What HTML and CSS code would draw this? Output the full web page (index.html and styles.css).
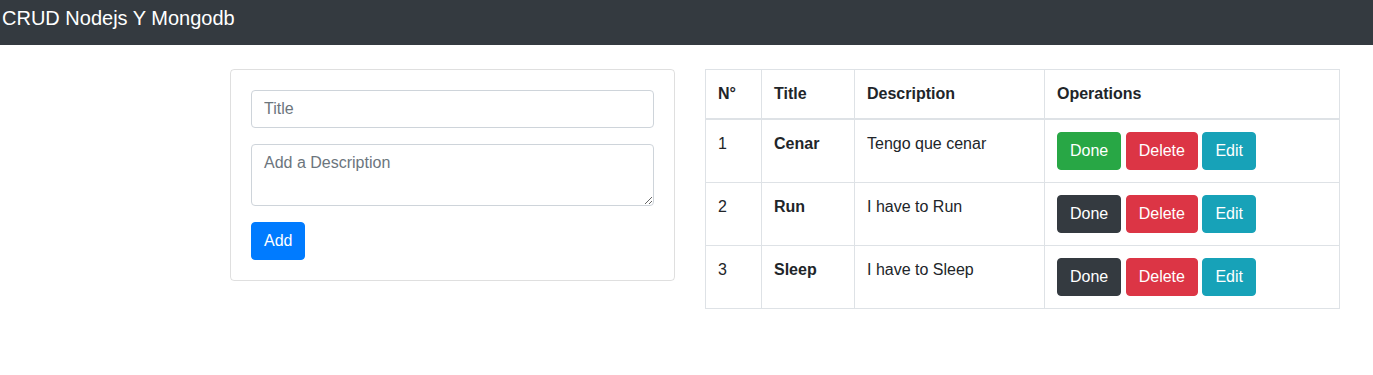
FILE: index.html
```html
<!DOCTYPE html>
<html>
<head>
	<meta charset="utf-8">
	<title>CRUD Nodejs Y Mongodb</title>
	<link rel="stylesheet" href="styles.css">
</head>
<body>
	<nav class="navbar">
		<a class="navbar__brand" href="/">CRUD Nodejs Y Mongodb</a>
	</nav>

	<div class="page">
		<div class="card">
			<form class="card__body" action="/add" method="post">
				<div class="form-group">
					<input class="form-control" type="text" name="title" placeholder="Title">
				</div>
				<div class="form-group">
					<textarea class="form-control" name="description" rows="2" placeholder="Add a Description"></textarea>
				</div>
				<button class="btn btn_primary" type="submit">Add</button>
			</form>
		</div>

		<table class="table">
			<colgroup>
				<col class="table__col-num">
				<col class="table__col-title">
				<col class="table__col-desc">
				<col>
			</colgroup>
			<thead>
				<tr>
					<th>N°</th>
					<th>Title</th>
					<th>Description</th>
					<th>Operations</th>
				</tr>
			</thead>
			<tbody>
				<tr>
					<td>1</td>
					<td><strong>Cenar</strong></td>
					<td>Tengo que cenar</td>
					<td>
						<a class="btn btn_success" href="#">Done</a>
						<a class="btn btn_danger" href="#">Delete</a>
						<a class="btn btn_info" href="#">Edit</a>
					</td>
				</tr>
				<tr>
					<td>2</td>
					<td><strong>Run</strong></td>
					<td>I have to Run</td>
					<td>
						<a class="btn btn_dark" href="#">Done</a>
						<a class="btn btn_danger" href="#">Delete</a>
						<a class="btn btn_info" href="#">Edit</a>
					</td>
				</tr>
				<tr>
					<td>3</td>
					<td><strong>Sleep</strong></td>
					<td>I have to Sleep</td>
					<td>
						<a class="btn btn_dark" href="#">Done</a>
						<a class="btn btn_danger" href="#">Delete</a>
						<a class="btn btn_info" href="#">Edit</a>
					</td>
				</tr>
			</tbody>
		</table>
	</div>
</body>
</html>
```

FILE: styles.css
```css
body {
	margin: 0;
	color: #212529;
	font-size: 16px;
	line-height: 1.5;
	font-family: "Liberation Sans", Arial, sans-serif;
	background-color: #fff;
}


.navbar {
	height: 45px;
	box-sizing: border-box;
	padding: 3px 2px 0;
	background-color: #343a40;
}
	.navbar__brand {
		color: #fff;
		font-size: 20px;
		line-height: 30px;
		text-decoration: none;
	}


.page {
	display: flex;
	align-items: flex-start;
	gap: 30px;
	padding: 24px 0 0 230px;
}


.card {
	width: 445px;
	box-sizing: border-box;
	border: 1px solid rgba(0,0,0,.125);
	border-radius: 4px;
}
	.card__body {
		padding: 20px;
	}

.form-group {
	margin-bottom: 16px;
}

.form-control {
	display: block;
	width: 100%;
	box-sizing: border-box;
	height: 38px;
	margin: 0;
	padding: 6px 12px;
	color: #495057;
	font: inherit;
	border: 1px solid #ced4da;
	border-radius: 4px;
	background-color: #fff;
}
	textarea.form-control {
		height: 62px;
		resize: vertical;
	}
	.form-control::placeholder {
		color: #6c757d;
		opacity: 1;
	}


.btn {
	display: inline-block;
	padding: 6px 12px;
	color: #fff;
	font: inherit;
	line-height: 24px;
	text-decoration: none;
	border: 1px solid transparent;
	border-radius: 4px;
	cursor: pointer;
}
	.btn_primary { background-color: #007bff; border-color: #007bff; }
	.btn_success { background-color: #28a745; border-color: #28a745; }
	.btn_danger  { background-color: #dc3545; border-color: #dc3545; }
	.btn_info    { background-color: #17a2b8; border-color: #17a2b8; }
	.btn_dark    { background-color: #343a40; border-color: #343a40; }


.table {
	width: 635px;
	table-layout: fixed;
	border-collapse: collapse;
	border: 1px solid #dee2e6;
}
	.table__col-num { width: 56px; }
	.table__col-title { width: 93px; }
	.table__col-desc { width: 190px; }

	.table th,
	.table td {
		padding: 12px;
		text-align: left;
		vertical-align: top;
		border: 1px solid #dee2e6;
	}
	.table thead th {
		font-weight: bold;
		border-bottom-width: 2px;
	}
```
